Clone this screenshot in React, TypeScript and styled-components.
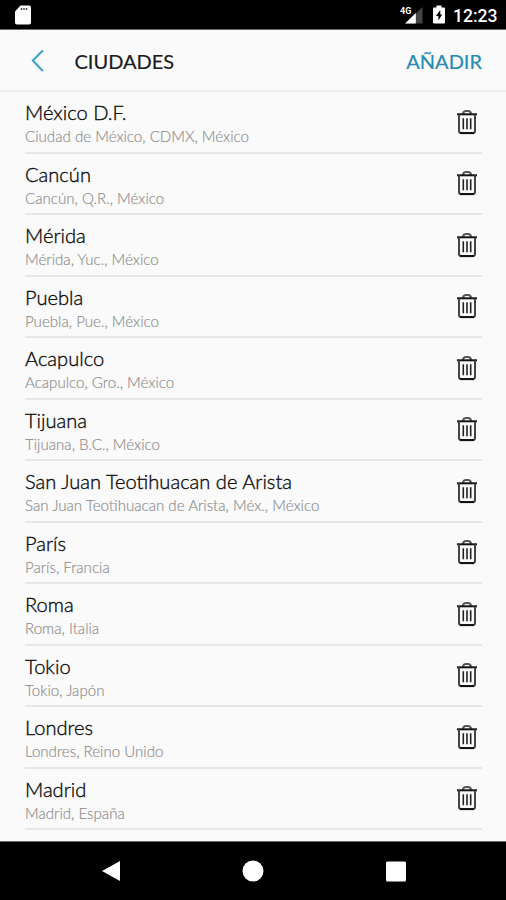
import React from 'react';
import styled, { createGlobalStyle } from 'styled-components';

const GlobalStyle = createGlobalStyle`
  * { box-sizing: border-box; }
  html, body { margin: 0; padding: 0; background: #fafafa; }
`;

const Screen = styled.div`
  display: flex;
  flex-direction: column;
  width: 506px;
  height: 900px;
  overflow: hidden;
  background: #fafafa;
  font-family: Lato, sans-serif;
`;

const StatusBar = styled.header`
  display: flex;
  align-items: center;
  flex: none;
  height: 30px;
  padding: 1px 9px 0 14px;
  background: #000;
  border-bottom: 1px solid #6a6a6a;
  color: #fff;
`;

const StatusIcons = styled.div`
  display: flex;
  align-items: center;
  margin-left: auto;
`;

const Clock = styled.time`
  width: 44px;
  margin-left: 8px;
  padding-top: 2px;
  font: 500 17.5px/20px Roboto, sans-serif;
  white-space: nowrap;
`;

const BatterySvg = styled.svg`
  margin-left: 9px;
`;

const AppBar = styled.nav`
  display: flex;
  align-items: center;
  flex: none;
  height: 62px;
  padding: 2px 24px 0 30px;
  border-bottom: 2px solid #efefef;
`;

const IconButton = styled.button`
  display: flex;
  padding: 0;
  border: 0;
  background: none;
`;

const Heading = styled.h1`
  margin: 0 auto 0 28.5px;
  font-size: 20px;
  line-height: 24px;
  font-weight: 400;
  color: #1c1c1c;
  -webkit-text-stroke: 0.2px #1c1c1c;
`;

const AddButton = styled.button`
  padding: 0;
  border: 0;
  background: none;
  font: 400 20px/24px Lato, sans-serif;
  color: #268bb2;
  -webkit-text-stroke: 0.2px #268bb2;
`;

const CityList = styled.ul`
  flex: 1;
  margin: 0;
  padding: 0 24px 0 25px;
  list-style: none;
`;

const CityRow = styled.li`
  display: flex;
  align-items: center;
  justify-content: space-between;
  height: 61.53px;
  padding-right: 5px;
  border-bottom: 2px solid #e7e7e7;
`;

const CityText = styled.div`
  padding-top: 4.6px;
`;

const CityName = styled.div`
  font-size: 20.1px;
  line-height: 24px;
  font-weight: 300;
  color: #0c0c0c;
  -webkit-text-stroke: 0.35px #0c0c0c;
`;

const CityPlace = styled.div`
  font-size: 15.1px;
  line-height: 24px;
  font-weight: 300;
  color: #8c8c8c;
  -webkit-text-stroke: 0.15px #8c8c8c;
`;

const NavBar = styled.footer`
  display: flex;
  align-items: center;
  justify-content: space-between;
  flex: none;
  height: 59px;
  padding: 0 99px 0 101px;
  background: #000;
  border-top: 1px solid #6a6a6a;
`;

const CardIcon = () => (
  <svg width="18" height="20" viewBox="0 0 18 20">
    <path d="M6.500 .5H15q2 0 2 2v15q0 2-2 2H3q-2 0-2-2V6.500z" fill="#fff" />
    <path d="M7.500 3v2M10 3v2M12.500 3v2" stroke="#444" strokeWidth="1.400" />
  </svg>
);

const SignalIcon = () => (
  <svg width="24" height="20" viewBox="0 0 24 20">
    <path d="M22.500 2v16.500H5.500z" fill="#444" />
    <path d="M15.800 8V18.500H5z" fill="#fff" />
    <text x="0" y="8.500" fill="#fff" fontFamily="Roboto, sans-serif" fontSize="9" fontWeight="700">4G</text>
  </svg>
);

const BatteryIcon = () => (
  <BatterySvg width="12" height="20" viewBox="0 0 12 20">
    <path d="M3.500 .5h5v2H11q1 0 1 1v14q0 1-1 1H1q-1 0-1-1v-14q0-1 1-1h2.500z" fill="#fff" />
    <path d="M7.300 5 3 11h2.400v4.500L9.200 9.500H7.300z" fill="#000" />
  </BatterySvg>
);

const BackIcon = () => (
  <svg width="16" height="24" viewBox="0 0 16 24" fill="none" stroke="#3b9fc6" strokeWidth="2">
    <path d="M12.800 1.500 2.800 11.500l10 10.500" />
  </svg>
);

const TrashIcon = () => (
  <svg width="20" height="26" viewBox="0 0 20 26" fill="none">
    <path d="M6 4.800q.3-2.800 3-2.800h2q2.700 0 3 2.800" stroke="#555" strokeWidth="2" />
    <path d="M0 5.300h20" stroke="#111" strokeWidth="2" />
    <path d="M2 5.300v16.800q0 2 2 2h12q2 0 2-2V5.300" stroke="#444" strokeWidth="2" />
    <path d="M3 24.100h14" stroke="#111" strokeWidth="2" />
    <path d="M6.300 9.300v11M10 9.300v11M13.700 9.300v11" stroke="#222" strokeWidth="1.600" />
  </svg>
);

const cities = [
  { name: 'México D.F.', place: 'Ciudad de México, CDMX, México' },
  { name: 'Cancún', place: 'Cancún, Q.R., México' },
  { name: 'Mérida', place: 'Mérida, Yuc., México' },
  { name: 'Puebla', place: 'Puebla, Pue., México' },
  { name: 'Acapulco', place: 'Acapulco, Gro., México' },
  { name: 'Tijuana', place: 'Tijuana, B.C., México' },
  { name: 'San Juan Teotihuacan de Arista', place: 'San Juan Teotihuacan de Arista, Méx., México' },
  { name: 'París', place: 'París, Francia' },
  { name: 'Roma', place: 'Roma, Italia' },
  { name: 'Tokio', place: 'Tokio, Japón' },
  { name: 'Londres', place: 'Londres, Reino Unido' },
  { name: 'Madrid', place: 'Madrid, España' },
];

export default function App() {
  return (
    <Screen>
      <GlobalStyle />
      <StatusBar>
        <CardIcon />
        <StatusIcons>
          <SignalIcon />
          <BatteryIcon />
          <Clock>12:23</Clock>
        </StatusIcons>
      </StatusBar>
      <AppBar>
        <IconButton aria-label="Atrás"><BackIcon /></IconButton>
        <Heading>CIUDADES</Heading>
        <AddButton>AÑADIR</AddButton>
      </AppBar>
      <CityList>
        {cities.map(({ name, place }) => (
          <CityRow key={name}>
            <CityText>
              <CityName>{name}</CityName>
              <CityPlace>{place}</CityPlace>
            </CityText>
            <IconButton aria-label={`Eliminar ${name}`}><TrashIcon /></IconButton>
          </CityRow>
        ))}
      </CityList>
      <NavBar>
        <svg width="20" height="22" viewBox="0 0 20 22"><path d="M19 1v20L1 11z" fill="#fff" /></svg>
        <svg width="22" height="22" viewBox="0 0 22 22"><circle cx="11" cy="11" r="10.500" fill="#fff" /></svg>
        <svg width="22" height="22" viewBox="0 0 22 22"><rect x="1" y="1.500" width="20" height="20" rx="1.500" fill="#fff" /></svg>
      </NavBar>
    </Screen>
  );
}
